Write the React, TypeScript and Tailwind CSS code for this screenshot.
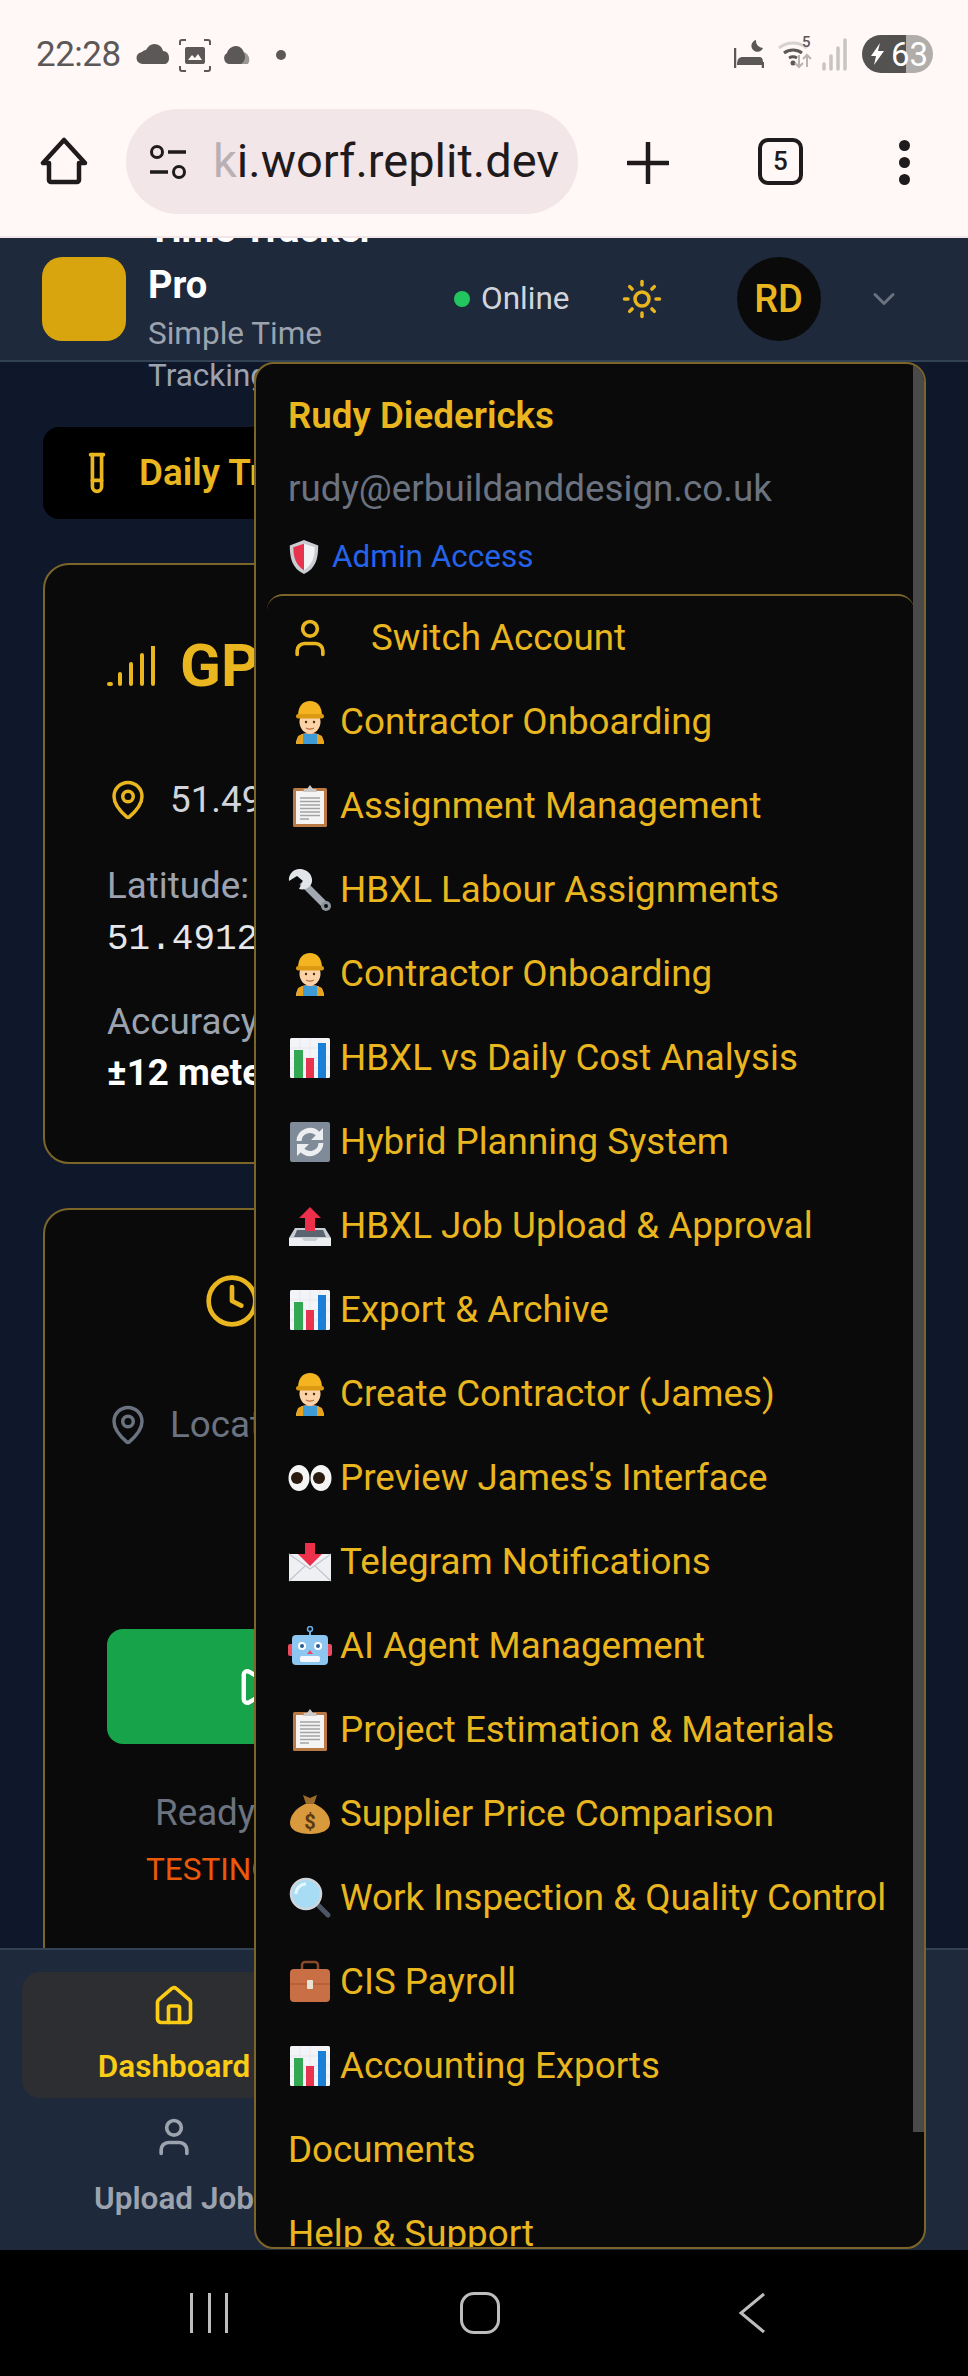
import { ChevronDown, Clock, House, MapPin, Play, Sun, TestTube, User } from "lucide-react";

const GOLD = "text-[#e9b61f]";

const Worker = () => (
  <svg viewBox="0 0 30 43" className="h-[43px] w-[30px] shrink-0">
    <path d="M1 43c0-8 5-11 14-11s14 3 14 11z" fill="#f7c9a0" />
    <path d="M8 33h14v10H8z" fill="#3f9bd6" />
    <path d="M3 35l5-2v10H1zM27 35l-5-2v10h7z" fill="#e8a21c" />
    <ellipse cx="15" cy="21" rx="10.500" ry="11.500" fill="#fbd3a6" />
    <circle cx="11" cy="21" r="1.200" fill="#4a2c16" />
    <circle cx="19" cy="21" r="1.200" fill="#4a2c16" />
    <path d="M11 27c2 1.500 6 1.500 8 0" stroke="#a0562c" strokeWidth="1" fill="none" />
    <path d="M3 15C3 5 8 0 15 0s12 5 12 15z" fill="#f4b41f" />
    <rect x="1" y="13" width="28" height="4.500" rx="2.200" fill="#dc9912" />
  </svg>
);

const Clipboard = () => (
  <svg viewBox="0 0 34 42" className="h-[42px] w-[34px] shrink-0">
    <rect x="0" y="3" width="34" height="39" rx="1.500" fill="#b97a45" />
    <rect x="3" y="6" width="28" height="33" fill="#f4f4f4" />
    <path d="M7 13h20M7 16.500h20M7 20h20M7 23.500h20M7 27h20M7 30.500h20M7 34h9" stroke="#a3a3a3" strokeWidth="1.300" />
    <path d="M10 7l1-3h3l3-4 3 4h3l1 3z" fill="#c9c9c9" />
  </svg>
);

const Wrench = () => (
  <svg viewBox="0 0 44 44" className="h-[44px] w-[44px] shrink-0">
    <path d="M14 14l24 24" stroke="#a3a9b1" strokeWidth="7" />
    <path d="M13 1C6 0 0 6 1 13l8-5 6 5-4 8c7 2 14-3 13-10C23 5 19 2 13 1z" fill="#e2e5e9" />
    <circle cx="38" cy="38" r="5" fill="#8d949c" />
    <circle cx="38" cy="38" r="2" fill="#0a0a0a" />
  </svg>
);

const Chart = () => (
  <svg viewBox="0 0 40 40" className="h-10 w-10 shrink-0">
    <rect x="0" y="0" width="40" height="40" rx="1.500" fill="#f3f4f7" />
    <path d="M0 10h40M0 20h40M0 30h40M10 0v40M20 0v40M30 0v40" stroke="#dfe3ea" strokeWidth="0.700" />
    <rect x="4" y="12" width="9" height="28" fill="#32a852" />
    <rect x="16" y="20" width="8" height="20" fill="#e8344e" />
    <rect x="28" y="5" width="8" height="35" fill="#1a7fd6" />
  </svg>
);

const Refresh = () => (
  <svg viewBox="0 0 40 40" className="h-10 w-10 shrink-0">
    <rect x="0" y="0" width="40" height="40" rx="2" fill="#7f8b98" />
    <path d="M9 19a11 11 0 0 1 19-7" stroke="#eceef0" strokeWidth="5" fill="none" />
    <path d="M31 21a11 11 0 0 1-19 7" stroke="#eceef0" strokeWidth="5" fill="none" />
    <path d="M33 6v12H21zM7 34V22h12z" fill="#eceef0" />
  </svg>
);

const Outbox = () => (
  <svg viewBox="0 0 44 40" className="h-10 w-11 shrink-0">
    <path d="M7 22h30l6 10v8H1v-8z" fill="#c9cdd4" />
    <path d="M1 32h13l2 3h12l2-3h13v8H1z" fill="#eceef1" />
    <path d="M9 24h26l3 7H6z" fill="#5b6470" />
    <path d="M22 1l11 11h-6v13H17V12h-6z" fill="#ec2f4b" />
  </svg>
);

const Eyes = () => (
  <svg viewBox="0 0 44 40" className="h-10 w-11 shrink-0">
    <ellipse cx="11" cy="20" rx="10.500" ry="13" fill="#f5f5f5" />
    <ellipse cx="33" cy="20" rx="10.500" ry="13" fill="#f5f5f5" />
    <circle cx="9" cy="20" r="6" fill="#2a1a10" />
    <circle cx="31" cy="20" r="6" fill="#2a1a10" />
  </svg>
);

const Envelope = () => (
  <svg viewBox="0 0 44 40" className="h-10 w-11 shrink-0">
    <path d="M1 12h42v27H1z" fill="#eef0f3" />
    <path d="M1 12l21 15 21-15M1 39l16-15M43 39L27 24" stroke="#c3c7cd" strokeWidth="1.200" fill="none" />
    <path d="M17 1h10v11h7L22 24 10 12h7z" fill="#ec2f4b" />
  </svg>
);

const Robot = () => (
  <svg viewBox="0 0 44 40" className="h-10 w-11 shrink-0">
    <circle cx="22" cy="3" r="2.500" fill="none" stroke="#6ab0e8" strokeWidth="1.500" />
    <path d="M21 5h2v5h-2z" fill="#6ab0e8" />
    <rect x="0" y="18" width="6" height="12" rx="2" fill="#ec4a5f" />
    <rect x="38" y="18" width="6" height="12" rx="2" fill="#ec4a5f" />
    <rect x="4" y="9" width="36" height="30" rx="4" fill="#8ec6f2" />
    <circle cx="14" cy="20" r="4" fill="#fff" />
    <circle cx="30" cy="20" r="4" fill="#fff" />
    <circle cx="14" cy="20" r="2" fill="#2b5d99" />
    <circle cx="30" cy="20" r="2" fill="#2b5d99" />
    <path d="M22 24l3 4h-6z" fill="#ec4a5f" />
    <rect x="12" y="30" width="20" height="6" rx="2" fill="#f4f8fc" />
  </svg>
);

const MoneyBag = () => (
  <svg viewBox="0 0 44 42" className="h-[42px] w-11 shrink-0">
    <path d="M15 2l7 3 7-3-3 9h-8z" fill="#9a6a2a" />
    <path d="M17 11h10c10 5 15 12 15 19 0 7-8 11-20 11S2 37 2 30c0-7 5-14 15-19z" fill="#d99a3e" />
    <text x="22" y="36" textAnchor="middle" fontSize="20" fontWeight="700" fill="#5b3a14" fontFamily="Roboto, sans-serif">$</text>
  </svg>
);

const Magnifier = () => (
  <svg viewBox="0 0 44 42" className="h-[42px] w-11 shrink-0">
    <path d="M28 26l12 12" stroke="#4b5563" strokeWidth="5" strokeLinecap="round" />
    <circle cx="18" cy="17" r="15" fill="#a8dcf5" stroke="#cfd6dc" strokeWidth="2.500" />
    <path d="M8 17a10 10 0 0 1 10-10" stroke="#e6f7ff" strokeWidth="3" fill="none" />
  </svg>
);

const Briefcase = () => (
  <svg viewBox="0 0 44 44" className="h-11 w-11 shrink-0">
    <path d="M14 10V5a3 3 0 0 1 3-3h10a3 3 0 0 1 3 3v5" stroke="#8a4a2a" strokeWidth="2.500" fill="none" />
    <rect x="2" y="9" width="40" height="33" rx="4" fill="#c96f45" />
    <path d="M2 24h40" stroke="#a5532e" strokeWidth="1.200" />
    <rect x="19" y="20" width="6" height="9" rx="1" fill="#e9e3d6" />
  </svg>
);

const Shield = () => (
  <svg viewBox="0 0 36 40" className="h-[36px] w-[32px] shrink-0">
    <path d="M18 1l16 6c0 15-3 26-16 32C5 33 2 22 2 7z" fill="#c9cdd2" />
    <path d="M18 5L6 9c0 12 3 20 12 26z" fill="#e8334f" />
    <path d="M18 5l12 4c0 12-3 20-12 26z" fill="#f2f3f5" />
  </svg>
);

const menuItems = [
  { icon: <Worker />, label: "Contractor Onboarding" },
  { icon: <Clipboard />, label: "Assignment Management" },
  { icon: <Wrench />, label: "HBXL Labour Assignments" },
  { icon: <Worker />, label: "Contractor Onboarding" },
  { icon: <Chart />, label: "HBXL vs Daily Cost Analysis" },
  { icon: <Refresh />, label: "Hybrid Planning System" },
  { icon: <Outbox />, label: "HBXL Job Upload & Approval" },
  { icon: <Chart />, label: "Export & Archive" },
  { icon: <Worker />, label: "Create Contractor (James)" },
  { icon: <Eyes />, label: "Preview James's Interface" },
  { icon: <Envelope />, label: "Telegram Notifications" },
  { icon: <Robot />, label: "AI Agent Management" },
  { icon: <Clipboard />, label: "Project Estimation & Materials" },
  { icon: <MoneyBag />, label: "Supplier Price Comparison" },
  { icon: <Magnifier />, label: "Work Inspection & Quality Control" },
  { icon: <Briefcase />, label: "CIS Payroll" },
  { icon: <Chart />, label: "Accounting Exports" },
];

const StatusBar = () => (
  <div className="flex h-[100px] items-center justify-between bg-[#fff8f7] pl-[36px] pr-[35px] pt-[8px] text-[#5c5858]">
    <div className="flex items-center">
      <span className="w-[100px] text-[35px] leading-none tracking-[-0.5px]">22:28</span>
      <svg viewBox="0 0 150 40" className="h-[40px] w-[150px]">
        <path d="M7 30a6 6 0 0 1-1-12c1-1 2-2 4-2 2-4 5-6 8-6 5 0 8 3 9 7 4 0 6 3 6 7 0 4-2 6-5 6z" fill="#5c5858" />
        <path d="M44 11V8a2 2 0 0 1 2-2h4M68 6h4a2 2 0 0 1 2 2v3M44 32v3a2 2 0 0 0 2 2h4M74 32v3a2 2 0 0 1-2 2h-4" stroke="#5c5858" strokeWidth="2" fill="none" />
        <rect x="49" y="13" width="20" height="17" rx="2" fill="#5c5858" />
        <path d="M52 26l4-5 3 3 3-4 4 6z" fill="#fff8f7" />
        <path d="M108 18a8 8 0 0 1 4 12h-14z" fill="#9c9898" />
        <path d="M93 30a6 6 0 0 1-2-11c1-4 5-7 9-7 4 0 7 3 8 7 2 3 1 9-3 11z" fill="#5c5858" />
        <circle cx="145" cy="21" r="5" fill="#5c5858" />
      </svg>
    </div>
    <div className="flex items-center">
      <svg viewBox="0 0 30 30" className="mr-[14px] h-[30px] w-[30px]">
        <path d="M1 9v20M29 23v6" stroke="#5c5858" strokeWidth="2.500" fill="none" />
        <path d="M1 26h28v-3c0-3-1-5-4-5H9c-4 0-6 2-6 8z" fill="#5c5858" />
        <path d="M22 1a6 6 0 1 0 7 8 7 7 0 0 1-7-8z" fill="#5c5858" />
      </svg>
      <svg viewBox="0 0 70 40" className="mr-[14px] h-[40px] w-[70px]">
        <path d="M1 14a22 22 0 0 1 28 0" stroke="#d6d2d2" strokeWidth="3" fill="none" />
        <path d="M6 19a15 15 0 0 1 18 0M11 24a8 8 0 0 1 8 0" stroke="#5c5858" strokeWidth="3" fill="none" />
        <circle cx="15" cy="29" r="2.500" fill="#5c5858" />
        <text x="24" y="13" fontSize="15" fontWeight="500" fill="#5c5858" fontFamily="Roboto, sans-serif">5</text>
        <path d="M21 21v12M17 29l4 4 4-4" stroke="#b8b4b4" strokeWidth="2" fill="none" />
        <path d="M29 33V21M25 25l4-4 4 4" stroke="#b8b4b4" strokeWidth="2" fill="none" />
        <path d="M46 35v-5M53 35V22M60 35V14M67 35V6" stroke="#c8c4c4" strokeWidth="3.500" strokeLinecap="round" />
      </svg>
      <div className="flex h-[38px] w-[71px] items-center overflow-hidden rounded-full bg-[linear-gradient(90deg,#545151_62%,#b1adab_62%)] pl-[9px] text-[33px] leading-none text-white">
        <svg viewBox="0 0 14 22" className="mr-[6px] h-[22px] w-[14px]">
          <path d="M9 0L0 13h5l-2 9 10-14H7z" fill="#fff" />
        </svg>
        63
      </div>
    </div>
  </div>
);

const BrowserBar = () => (
  <div className="relative z-20 flex h-[138px] shrink-0 items-start border-b-[2px] border-[#f3e6e8] bg-[#fff8f7] pl-[40px] pt-[9px] text-[#1f1a1c]">
    <svg viewBox="0 0 48 48" className="mt-[28px] h-[48px] w-[48px]">
      <path d="M24 3L3 26h6v17a2 2 0 0 0 2 2h26a2 2 0 0 0 2-2V26h6z" fill="none" stroke="#1f1a1c" strokeWidth="4.500" strokeLinejoin="round" />
    </svg>
    <div className="ml-[38px] flex h-[105px] w-[452px] items-center overflow-hidden rounded-full bg-[#f3e6e8] pl-[22px] text-[47px]">
      <svg viewBox="0 0 40 40" className="mr-[25px] h-[40px] w-[40px] shrink-0">
        <circle cx="9" cy="10" r="5.500" fill="none" stroke="#1f1a1c" strokeWidth="3" />
        <path d="M20 10h18M2 30h18" stroke="#1f1a1c" strokeWidth="3.500" />
        <circle cx="31" cy="30" r="5.500" fill="none" stroke="#1f1a1c" strokeWidth="3" />
      </svg>
      <span className="whitespace-nowrap">
        <span className="text-[#b9b0b3]">k</span>i.worf.replit.dev
      </span>
    </div>
    <svg viewBox="0 0 42 42" className="ml-[49px] mt-[33px] h-[42px] w-[42px]">
      <path d="M21 1v40M1 21h40" stroke="#1f1a1c" strokeWidth="4.500" strokeLinecap="round" />
    </svg>
    <div className="ml-[89px] mt-[29px] flex h-[47px] w-[45px] items-center justify-center rounded-[10px] border-[4px] border-[#1f1a1c] text-[26px] font-medium">5</div>
    <div className="ml-[96px] mt-[31px] flex flex-col gap-[6px]">
      <span className="h-[11px] w-[11px] rounded-full bg-[#1f1a1c]" />
      <span className="h-[11px] w-[11px] rounded-full bg-[#1f1a1c]" />
      <span className="h-[11px] w-[11px] rounded-full bg-[#1f1a1c]" />
    </div>
  </div>
);

const Header = () => (
  <header className="relative z-10 flex h-[124px] shrink-0 items-center border-b-[2px] border-[#334155] bg-[#1e293b] pl-[42px]">
    <div className="h-[84px] w-[84px] shrink-0 rounded-[20px] bg-[#d8a50e]" />
    <div className="ml-[22px] w-[250px] shrink-0">
      <div className="text-[38px] font-bold leading-[56px] text-white">Time Tracker Pro</div>
      <div className="text-[31.5px] leading-[42px] text-[#9ca3af]">Simple Time Tracking</div>
    </div>
    <span className="ml-[56px] h-[16px] w-[16px] shrink-0 rounded-full bg-[#22c55e]" />
    <span className="ml-[11px] text-[31.5px] text-[#d1d5db]">Online</span>
    <Sun className="ml-[51px] h-[42px] w-[42px] shrink-0 text-[#e9b61f]" strokeWidth={2} />
    <div className={`ml-[74px] flex h-[84px] w-[84px] shrink-0 items-center justify-center rounded-full bg-[#0a0a0a] text-[38px] font-medium ${GOLD}`}>RD</div>
    <ChevronDown className="ml-[45px] h-[36px] w-[36px] shrink-0 text-[#6b7280]" strokeWidth={2} />
  </header>
);

const Main = () => (
  <main className="flex min-h-0 flex-1 flex-col overflow-hidden bg-[#0f172a] px-[43px] pt-[65px]">
    <div className="flex h-[92px] shrink-0 items-center rounded-[16px] bg-black pl-[32px]">
      <TestTube className={`h-[44px] w-[44px] ${GOLD}`} strokeWidth={2} />
      <span className={`ml-[20px] text-[36.75px] font-semibold ${GOLD}`}>Daily Tracker</span>
    </div>
    <section className="mt-[44px] h-[601px] shrink-0 overflow-hidden rounded-[26px] border-[2px] border-[#7c6528] bg-[#0a0a0a] pl-[62px]">
      <div className="mt-[71px] flex items-center">
        <svg viewBox="0 0 48 40" className="h-[40px] w-[48px]">
          <path d="M2 38h2M13 38V28M24 38V18M35 38V9M46 38V0" stroke="#e9b61f" strokeWidth="4" strokeLinecap="round" />
        </svg>
        <span className={`ml-[25px] text-[60px] font-bold leading-none ${GOLD}`}>GPS</span>
      </div>
      <div className="mt-[76px] flex items-center text-[36.75px] text-[#d1d5db]">
        <MapPin className={`h-[42px] w-[42px] ${GOLD}`} strokeWidth={2} />
        <span className="ml-[21px]">51.49</span>
      </div>
      <div className="mt-[35px] text-[36.75px] leading-[48px] text-[#9ca3af]">Latitude:</div>
      <div className="mt-[7px] font-['Liberation_Mono',monospace] text-[36px] leading-[46px] text-[#e5e7eb]">51.4912</div>
      <div className="mt-[35px] text-[36.75px] leading-[48px] text-[#9ca3af]">Accuracy:</div>
      <div className="mt-[3px] text-[36.75px] font-bold leading-[48px] text-white">±12 meters</div>
    </section>
    <section className="mt-[44px] h-[800px] shrink-0 rounded-[26px] border-[2px] border-[#7c6528] bg-[#0a0a0a] pl-[62px]">
      <Clock className={`ml-[97px] mt-[63px] h-[56px] w-[56px] ${GOLD}`} strokeWidth={2} />
      <div className="mt-[68px] flex items-center text-[36.75px] text-[#6b7280]">
        <MapPin className="h-[42px] w-[42px]" strokeWidth={2} />
        <span className="ml-[21px]">Location</span>
      </div>
      <div className="mt-[177px] flex h-[115px] items-center rounded-[16px] bg-[#16a34a] pl-[128px] text-white">
        <Play className="h-[42px] w-[42px]" strokeWidth={2.500} />
      </div>
      <div className="ml-[48px] mt-[48px] text-[36.75px] leading-[42px] text-[#6b7280]">Ready</div>
      <div className="ml-[39px] mt-[18px] text-[31.5px] leading-[36px] text-[#ea580c]">TESTING</div>
    </section>
  </main>
);

const BottomNav = () => (
  <nav className="relative z-10 h-[302px] shrink-0 border-t-[2px] border-[#334155] bg-[#1e293b] pl-[22px] pt-[22px]">
    <div className="flex h-[126px] w-[304px] flex-col items-center rounded-[18px] bg-[#2d2e32] pt-[12px]">
      <House className="h-[44px] w-[44px] text-[#facc15]" strokeWidth={2} />
      <span className="mt-[21px] text-[31.5px] font-semibold leading-[36px] text-[#facc15]">Dashboard</span>
    </div>
    <div className="flex w-[304px] flex-col items-center pt-[17px]">
      <User className="h-[44px] w-[44px] text-[#9ca3af]" strokeWidth={2} />
      <span className="mt-[22px] text-[31.5px] font-semibold leading-[36px] text-[#9ca3af]">Upload Job</span>
    </div>
  </nav>
);

const SystemNav = () => (
  <div className="relative z-20 flex h-[126px] shrink-0 items-center bg-black pl-[190px]">
    <div className="flex h-[40px] w-[38px] justify-between">
      <span className="w-[3px] bg-[#bdbdbd]" />
      <span className="w-[3px] bg-[#bdbdbd]" />
      <span className="w-[3px] bg-[#bdbdbd]" />
    </div>
    <div className="ml-[232px] h-[42px] w-[40px] rounded-[14px] border-[3px] border-[#bdbdbd]" />
    <svg viewBox="0 0 28 42" className="ml-[238px] h-[42px] w-[28px]">
      <path d="M26 2L3 21l23 19" stroke="#bdbdbd" strokeWidth="3" fill="none" />
    </svg>
  </div>
);

const UserMenu = () => (
  <div className={`absolute bottom-[127px] left-[254px] top-[362px] z-30 w-[672px] overflow-hidden rounded-[20px] border-[2px] border-[#7c6528] bg-[#0a0a0a] ${GOLD}`}>
    <div className="pl-[32px] pt-[30px]">
      <div className="text-[36.75px] font-semibold leading-[44px]">Rudy Diedericks</div>
      <div className="mt-[29px] text-[36.75px] leading-[44px] text-[#6b7280]">rudy@erbuildanddesign.co.uk</div>
      <div className="mt-[27px] flex h-[38px] items-center gap-[12px] text-[31.5px] text-[#2563eb]">
        <Shield />
        <span>Admin Access</span>
      </div>
    </div>
    <div className="ml-[11px] mr-[10px] mt-[18px] rounded-t-[16px] border-t-[2px] border-[#7c6528] pl-[21px]">
      <div className="flex h-[84px] items-center">
        <User className="mr-[39px] h-[44px] w-[44px] shrink-0" strokeWidth={2} />
        <span className="text-[36.75px]">Switch Account</span>
      </div>
      {menuItems.map((item, idx) => (
        <div key={idx} className="flex h-[84px] items-center whitespace-nowrap text-[36.75px]">
          <span className="mr-[9px] flex w-[43px] justify-center">{item.icon}</span>
          {item.label}
        </div>
      ))}
      <div className="flex h-[84px] items-center text-[36.75px]">Documents</div>
      <div className="flex h-[84px] items-center text-[36.75px]">Help & Support</div>
    </div>
    <div className="absolute right-0 top-0 h-[1768px] w-[11px] bg-[#4a4a4a]" />
  </div>
);

export default function App() {
  return (
    <div className="relative flex h-[2376px] w-[968px] flex-col overflow-hidden bg-black font-['Roboto',sans-serif]">
      <StatusBar />
      <BrowserBar />
      <Header />
      <Main />
      <BottomNav />
      <SystemNav />
      <UserMenu />
    </div>
  );
}
